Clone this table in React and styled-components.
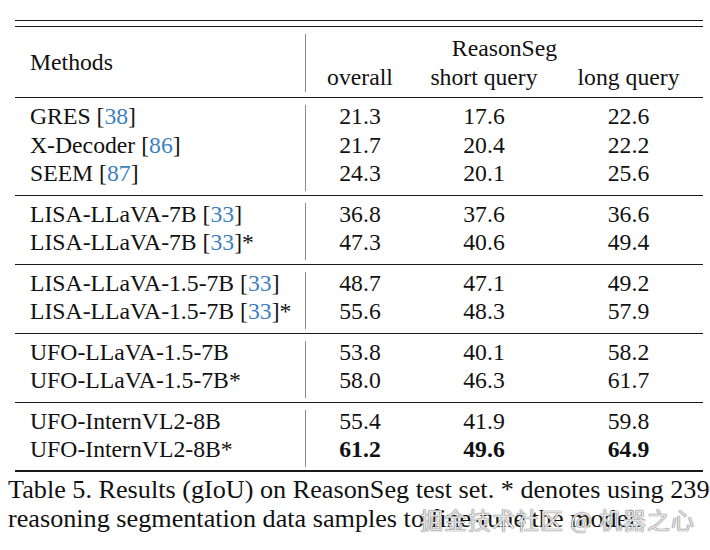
import React from 'react';
import styled, { createGlobalStyle } from 'styled-components';

const GlobalStyle = createGlobalStyle`
  html, body {
    margin: 0;
    padding: 0;
    background: #ffffff;
  }
  body {
    font-family: "Liberation Serif", "Times New Roman", serif;
    color: #111111;
  }
`;

const groups = [
  [
    { name: 'GRES', cite: '38', vals: ['21.3', '17.6', '22.6'] },
    { name: 'X-Decoder', cite: '86', vals: ['21.7', '20.4', '22.2'] },
    { name: 'SEEM', cite: '87', vals: ['24.3', '20.1', '25.6'] },
  ],
  [
    { name: 'LISA-LLaVA-7B', cite: '33', vals: ['36.8', '37.6', '36.6'] },
    { name: 'LISA-LLaVA-7B', cite: '33', star: true, vals: ['47.3', '40.6', '49.4'] },
  ],
  [
    { name: 'LISA-LLaVA-1.5-7B', cite: '33', vals: ['48.7', '47.1', '49.2'] },
    { name: 'LISA-LLaVA-1.5-7B', cite: '33', star: true, vals: ['55.6', '48.3', '57.9'] },
  ],
  [
    { name: 'UFO-LLaVA-1.5-7B', vals: ['53.8', '40.1', '58.2'] },
    { name: 'UFO-LLaVA-1.5-7B*', vals: ['58.0', '46.3', '61.7'] },
  ],
  [
    { name: 'UFO-InternVL2-8B', vals: ['55.4', '41.9', '59.8'] },
    { name: 'UFO-InternVL2-8B*', bold: true, vals: ['61.2', '49.6', '64.9'] },
  ],
];

const App = () => {
  return (
    <Page>
      <GlobalStyle />
      <Table>
        <TopRule />
        <Header>
          <MethodsCell>Methods</MethodsCell>
          <GroupTitle>ReasonSeg</GroupTitle>
          <SubHead>overall</SubHead>
          <SubHead>short query</SubHead>
          <SubHead>long query</SubHead>
        </Header>
        {groups.map((rows, gi) => (
          <Group key={gi} $last={gi === groups.length - 1}>
            {rows.map((row, ri) => (
              <React.Fragment key={ri}>
                <NameCell>
                  {row.name}
                  {row.cite && (
                    <>
                      {' '}[<Cite>{row.cite}</Cite>]
                    </>
                  )}
                  {row.star && '*'}
                </NameCell>
                {row.vals.map((v, vi) => (
                  <ValueCell key={vi} $bold={row.bold}>
                    {v}
                  </ValueCell>
                ))}
              </React.Fragment>
            ))}
          </Group>
        ))}
      </Table>
      <Caption>
        <CaptionLine>
          Table 5. Results (gIoU) on ReasonSeg test set. * denotes using 239
        </CaptionLine>
        <CaptionLine>
          reasoning segmentation data samples to fine-tune the model.
          <Watermark>掘金技术社区 @ 机器之心</Watermark>
        </CaptionLine>
      </Caption>
    </Page>
  );
};

export default App;

const Page = styled.div`
  position: relative;
  width: 710px;
  height: 550px;
  padding: 20px 0 0 0;
  box-sizing: border-box;
  overflow: hidden;
  background: #ffffff;
`;

const Table = styled.div`
  margin-left: 15px;
  width: 688px;
  font-size: 23.7px;
`;

const TopRule = styled.div`
  height: 5px;
  border-top: 1.5px solid #1a1a1a;
  border-bottom: 1.5px solid #1a1a1a;
`;

const columns = '291px 108px 140px 149px';

const Header = styled.div`
  display: grid;
  grid-template-columns: ${columns};
  grid-template-rows: 29px 29px;
  padding: 6.5px 0 5.5px;
  border-bottom: 1.3px solid #1a1a1a;
  line-height: 29px;
`;

const MethodsCell = styled.div`
  grid-row: 1 / span 2;
  display: flex;
  align-items: center;
  padding-left: 15px;
  border-right: 1.5px solid #8a8a8a;
`;

const GroupTitle = styled.div`
  grid-column: 2 / span 3;
  text-align: center;
`;

const SubHead = styled.div`
  text-align: center;
`;

const Group = styled.div`
  display: grid;
  grid-template-columns: ${columns};
  grid-auto-rows: 28.5px;
  line-height: 23px;
  padding: 7px 0 ${p => (p.$last ? '3.5px' : '4px')};
  border-bottom: ${p => (p.$last ? '2px' : '1.3px')} solid #1a1a1a;
`;

const NameCell = styled.div`
  padding-left: 15px;
  white-space: nowrap;
  border-right: 1.5px solid #8a8a8a;
`;

const Cite = styled.span`
  color: #3b7fc0;
`;

const ValueCell = styled.div`
  text-align: center;
  font-weight: ${p => (p.$bold ? 700 : 400)};
`;

const Caption = styled.div`
  margin: 3px 0 0 8px;
  font-size: 26.2px;
  line-height: 29px;
`;

const CaptionLine = styled.div`
  position: relative;
  white-space: nowrap;
`;

const Watermark = styled.span`
  position: absolute;
  left: 412px;
  top: 1px;
  font-family: "Noto Sans CJK SC", sans-serif;
  font-size: 23px;
  line-height: 29px;
  letter-spacing: 1px;
  color: rgba(245, 245, 245, 0.88);
  text-shadow: 0 0 1px rgba(90, 90, 90, 0.9), 0 0 1px rgba(90, 90, 90, 0.9);
`;
